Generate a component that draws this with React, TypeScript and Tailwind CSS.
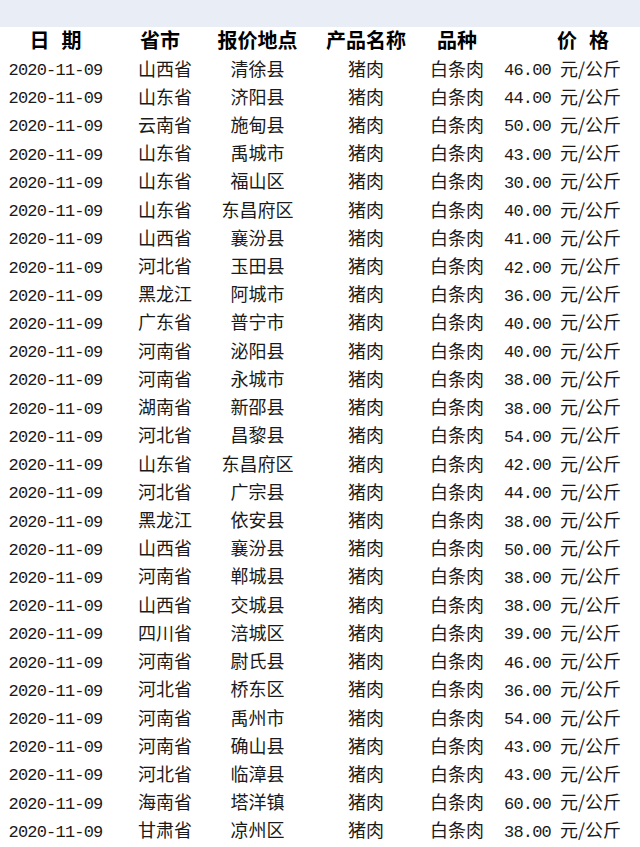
import React from 'react';

type Row = [string, string, string];

const rows: Row[] = [
  ['山西省', '清徐县', '46.00'],
  ['山东省', '济阳县', '44.00'],
  ['云南省', '施甸县', '50.00'],
  ['山东省', '禹城市', '43.00'],
  ['山东省', '福山区', '30.00'],
  ['山东省', '东昌府区', '40.00'],
  ['山西省', '襄汾县', '41.00'],
  ['河北省', '玉田县', '42.00'],
  ['黑龙江', '阿城市', '36.00'],
  ['广东省', '普宁市', '40.00'],
  ['河南省', '泌阳县', '40.00'],
  ['河南省', '永城市', '38.00'],
  ['湖南省', '新邵县', '38.00'],
  ['河北省', '昌黎县', '54.00'],
  ['山东省', '东昌府区', '42.00'],
  ['河北省', '广宗县', '44.00'],
  ['黑龙江', '依安县', '38.00'],
  ['山西省', '襄汾县', '50.00'],
  ['河南省', '郸城县', '38.00'],
  ['山西省', '交城县', '38.00'],
  ['四川省', '涪城区', '39.00'],
  ['河南省', '尉氏县', '46.00'],
  ['河北省', '桥东区', '36.00'],
  ['河南省', '禹州市', '54.00'],
  ['河南省', '确山县', '43.00'],
  ['河北省', '临漳县', '43.00'],
  ['海南省', '塔洋镇', '60.00'],
  ['甘肃省', '凉州区', '38.00'],
];

const cjk = "font-['Noto_Sans_CJK_SC',sans-serif]";
const mono = "font-['Liberation_Mono','Noto_Sans_CJK_SC',monospace] text-[17px] tracking-[-0.8px] pt-[6px]";

export default function App() {
  return (
    <div className={`w-[640px] h-[847px] bg-white text-[#1a1a1a] overflow-hidden ${cjk}`}>
      <div className="h-[27px] bg-[#e9edf6]" />

      {/* header */}
      <div className="flex items-center h-[26.4px] text-[20px] font-bold text-black leading-none">
        <div className="w-[111px] flex justify-center gap-[12px]">
          <span>日</span>
          <span>期</span>
        </div>
        <div className="w-[94px] pl-[29px]">省市</div>
        <div className="w-[105px] text-center">报价地点</div>
        <div className="w-[112px] text-center">产品名称</div>
        <div className="w-[70px] text-center">品种</div>
        <div className="flex-1 flex pl-[65px] gap-[12px]">
          <span>价</span>
          <span>格</span>
        </div>
      </div>

      {rows.map(([prov, place, price], i) => (
        <div key={i} className="flex items-center h-[28.22px] text-[18px] leading-none">
          <div className={`w-[111px] text-center ${mono}`}>2020-11-09</div>
          <div className="w-[94px] pl-[27px]">{prov}</div>
          <div className="w-[105px] text-center">{place}</div>
          <div className="w-[112px] text-center">猪肉</div>
          <div className="w-[70px] text-center">白条肉</div>
          <div className={`w-[59px] text-right ${mono}`}>{price}</div>
          <div className="flex-1 pl-[9px]">元/公斤</div>
        </div>
      ))}
    </div>
  );
}
